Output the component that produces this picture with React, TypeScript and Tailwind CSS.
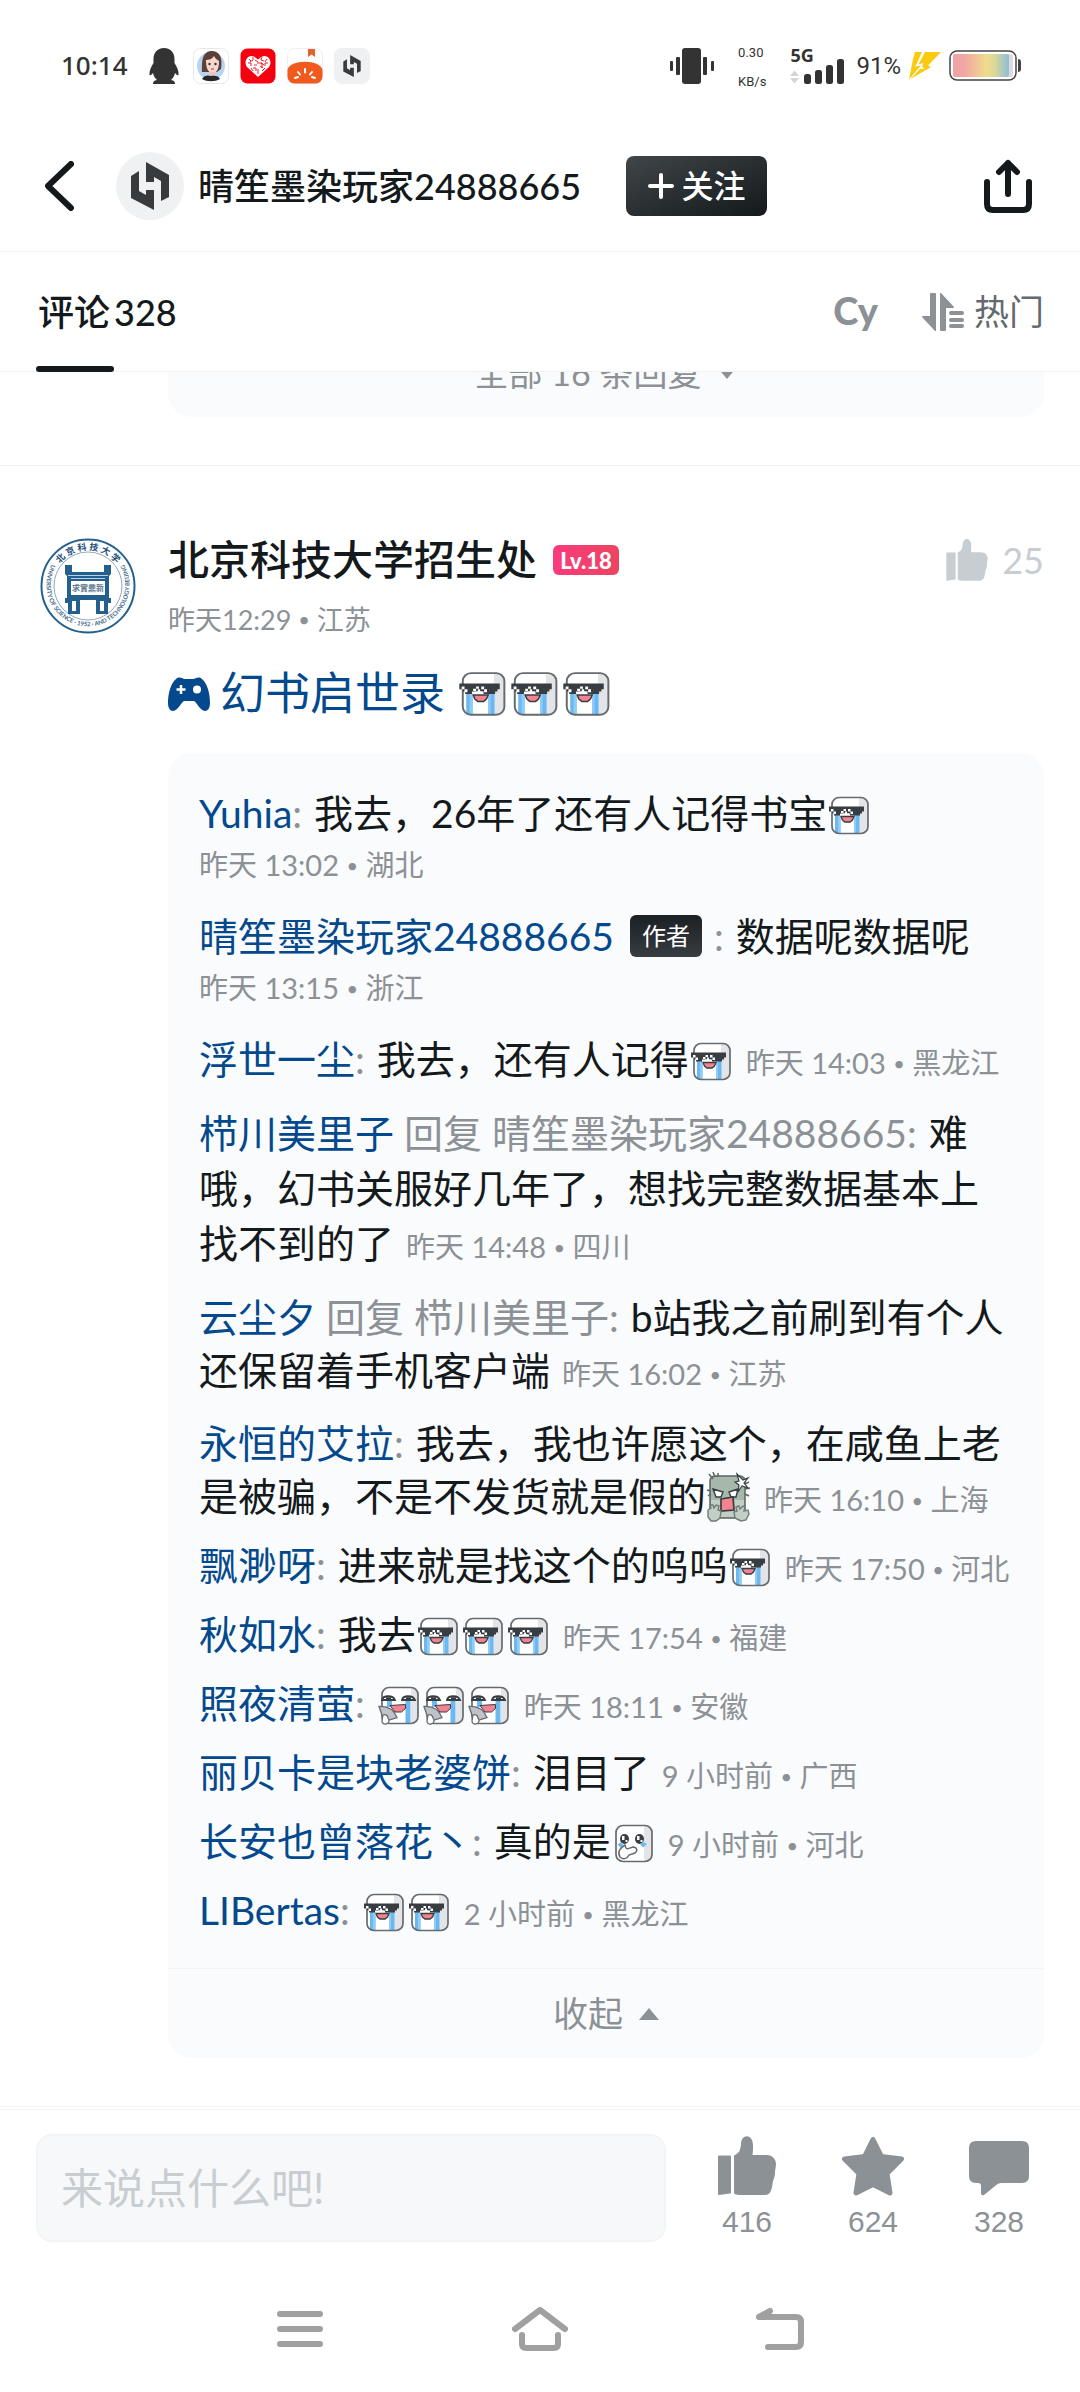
import React from "react";

type Reply = {
  name: string;
  author?: boolean;
  replyTo?: string;
  content: React.ReactNode;
  time: string;
  place: string;
  timeBelow?: boolean;
  className?: string;
};

const ShadesEmoji: React.FC<{ className?: string }> = ({ className = "h-10 w-[45px] align-[-8px]" }) => (
  <svg viewBox="0 0 45 40" className={`inline-block ${className}`} role="img" aria-label="墨镜哭">
    <rect x="5" y="1.5" width="36" height="36" rx="7" fill="#fff" />
    <path d="M32 1.5h2a7 7 0 0 1 7 7v22a7 7 0 0 1-7 7h-2z" fill="#e3e4e8" />
    <path d="M8 18h5.500v19.500H11a4 4 0 0 1-3-1zM27 18h5.500v19.500H27z" fill="#6bb9f0" />
    <path d="M11 18h2.500v19.500H11zM27 18h2v19.500H27z" fill="#8fcdf7" />
    <rect x="5" y="1.500" width="36" height="36" rx="7" fill="none" stroke="#666b70" strokeWidth="1.700" />
    <path d="M2 10.500h35v5h-2v2h-2v2H22v-2h-2v-2h-2v2h-2v2H7v-2H5v-2H2z" fill="#373d40" />
    <path d="M4 13h2.500v2.500H4zM6.500 15.500H9V18H6.500zM14 15h2.500v2H14zM16.500 13H19v2h-2.500zM21 13h2.500v2.500H21zM23.500 15.500H26V18h-2.500zM13 17.500h10v3H13z" fill="#fff" />
    <path d="M14 20.500h13l-1.500 3.500-2.500 2h-5l-2.500-2z" fill="#f4828f" stroke="#373d40" strokeWidth="1.300" />
  </svg>
);

const FanEmoji = () => (
  <svg viewBox="0 0 45 40" className="inline-block h-10 w-[45px] align-[-8px]" role="img" aria-label="笑哭">
    <rect x="5" y="1.500" width="36" height="36" rx="7" fill="#fff" />
    <path d="M34 1.500a7 7 0 0 1 7 7v22a7 7 0 0 1-7 7z" fill="#e3e4e8" />
    <path d="M10 14h5v7h-5zM28.500 14h5v23h-5z" fill="#6bb9f0" />
    <rect x="5" y="1.500" width="36" height="36" rx="7" fill="none" stroke="#666b70" strokeWidth="1.700" />
    <path d="M5 14c1-5 11-5 13 0zM25 14c1-5 11-5 13 0z" fill="#fff" stroke="#373d40" strokeWidth="1.800" />
    <path d="M9 12.500h5M29 12.500h5" stroke="#373d40" strokeWidth="2.500" />
    <path d="M13 19.500l15.500-1v4l-4 3.500H18z" fill="#f4828f" stroke="#373d40" strokeWidth="1" />
    <path d="M2 20.500q13-1 18 11l-8 2.500-6-2z" fill="#bfc2c6" stroke="#666b70" strokeWidth="1.300" />
    <path d="M6 29a3.500 3.500 0 0 1 5 3 3.500 3.500 0 0 1-2 6 3 3 0 0 1-4-3z" fill="#fff" stroke="#666b70" strokeWidth="1.300" />
  </svg>
);

const TearyEmoji = () => (
  <svg viewBox="0 0 45 40" className="inline-block h-10 w-[45px] align-[-8px]" role="img" aria-label="感动">
    <rect x="5" y="1.500" width="36" height="36" rx="7" fill="#fff" />
    <path d="M33 1.500h1a7 7 0 0 1 7 7v22a7 7 0 0 1-7 7h-1z" fill="#e3e4e8" />
    <rect x="5" y="1.500" width="36" height="36" rx="7" fill="none" stroke="#666b70" strokeWidth="1.700" />
    <ellipse cx="13.500" cy="15" rx="4.500" ry="5" fill="#373d40" />
    <ellipse cx="28.500" cy="15" rx="4.500" ry="5" fill="#373d40" />
    <path d="M11 12h2.500v4H11zM26 12h2.500v4H26zM14.500 16h2v2h-2zM29.500 16h2v2h-2z" fill="#fff" />
    <path d="M6.500 20.500l3-2 3 2-3 3zM29 20l3-2 4 2-4 3.500z" fill="#6bb9f0" />
    <path d="M9 33c-3-5 0-9 5-12l1 3c1 2 3 0 7-1 4 0 5 4 2 6l-6 2c-2 4-6 5-9 2z" fill="#fff" stroke="#666b70" strokeWidth="1.500" />
  </svg>
);

const ZombieEmoji = () => (
  <svg viewBox="0 0 46 50" className="inline-block h-[50px] w-[46px] align-[-11px]" role="img" aria-label="抓狂">
    <rect x="4" y="4" width="35" height="42" rx="5" fill="#a6b8ac" stroke="#5b6662" strokeWidth="1.500" />
    <path d="M5 28h33v13a4 4 0 0 1-4 4H9a4 4 0 0 1-4-4z" fill="#c3cec6" />
    <path d="M3 2l4 5M7 0l2 5M12 1v4M1 18l4 1M2 24l3-2M39 12l4-2M39 17l5-1M39 22l4 2" stroke="#5b6662" strokeWidth="1.500" />
    <path d="M31 2l2 7-4 1 4 3-1 7 4-6 6 2-4-5 4-5-5 2z" fill="#fff" stroke="#373d40" strokeWidth="1.200" />
    <path d="M7 17l10 3-2 5h-5zM32 17l-9 3 2 5h5z" fill="#fff" stroke="#373d40" strokeWidth="1.400" />
    <path d="M15 27l12-2 1 13-13 1z" fill="#f4828f" stroke="#373d40" strokeWidth="1.700" />
    <path d="M2 38l3-2-1-3h3l1 3 2-3 3 1-1 4 3 1-1 7-4 3H5l-3-4zM28 40l3-1-1-4 3-1 1 3 3-3 2 1-1 4 4-1 1 4-3 6-5 1-6-3z" fill="#c3cec6" stroke="#6f7c77" strokeWidth="1.400" />
  </svg>
);

const HLogo: React.FC<{ className: string }> = ({ className }) => (
  <svg viewBox="0 0 38 48" className={className} fill="#373b3d" aria-hidden="true">
    <path d="M0 14l8-5v20l7 4v-5h8v20L0 36z" />
    <path d="M15 0l23 13v22l-8 4V19l-7-4v5h-8z" />
  </svg>
);

const ThumbIcon: React.FC<{ className: string }> = ({ className }) => (
  <svg viewBox="0 0 58 59" className={className} fill="currentColor" aria-hidden="true">
    <path d="M1 19h11q1 0 1 1v36q0 1-1 1L1 58.500q-1 0-1-1V20q0-1 1-1z" />
    <path d="M16 19c6-3 6-5 7-11 0-11 12-11 12 1 0 4 0 6-.5 9.500H49c5 0 9 4 9 9 0 3-1 5-1 9 0 3-1 5-2 8l-1 6c-1 5-3 8-7 8H22c-3 0-6-1-6-2z" />
  </svg>
);

const replies: Reply[] = [
  { name: "Yuhia", content: <>我去，26年了还有人记得书宝<ShadesEmoji /></>, time: "昨天 13:02", place: "湖北", timeBelow: true },
  { name: "晴笙墨染玩家24888665", author: true, content: "数据呢数据呢", time: "昨天 13:15", place: "浙江", timeBelow: true, className: "mt-5" },
  { name: "浮世一尘", content: <>我去，还有人记得<ShadesEmoji /></>, time: "昨天 14:03", place: "黑龙江", className: "mt-5" },
  {
    name: "栉川美里子",
    replyTo: "晴笙墨染玩家24888665",
    content: <>难<br />哦，幻书关服好几年了，想找完整数据基本上<br />找不到的了</>,
    time: "昨天 14:48",
    place: "四川",
    className: "mt-5 leading-[55px]",
  },
  {
    name: "云尘夕",
    replyTo: "栉川美里子",
    content: <>b站我之前刷到有个人<br />还保留着手机客户端</>,
    time: "昨天 16:02",
    place: "江苏",
    className: "mt-5",
  },
  {
    name: "永恒的艾拉",
    content: <>我去，我也许愿这个，在咸鱼上老<br />是被骗，不是不发货就是假的<ZombieEmoji /></>,
    time: "昨天 16:10",
    place: "上海",
    className: "mt-5",
  },
  { name: "飘渺呀", content: <>进来就是找这个的呜呜<ShadesEmoji /></>, time: "昨天 17:50", place: "河北", className: "mt-4" },
  { name: "秋如水", content: <>我去<ShadesEmoji /><ShadesEmoji /><ShadesEmoji /></>, time: "昨天 17:54", place: "福建", className: "mt-4" },
  { name: "照夜清萤", content: <><FanEmoji /><FanEmoji /><FanEmoji /></>, time: "昨天 18:11", place: "安徽", className: "mt-4" },
  { name: "丽贝卡是块老婆饼", content: "泪目了", time: "9 小时前", place: "广西", className: "mt-4" },
  { name: "长安也曾落花丶", content: <>真的是<TearyEmoji /></>, time: "9 小时前", place: "河北", className: "mt-4" },
  { name: "LIBertas", content: <><ShadesEmoji /><ShadesEmoji /></>, time: "2 小时前", place: "黑龙江", className: "mt-4" },
];

const StatusBar = () => (
  <div className="flex h-[121px] items-center justify-between pr-[59px] pl-[61px] pt-2.5 text-[#333]">
    <div className="flex items-center">
      <span className="w-[72px] font-['Noto_Sans'] text-[26px] font-medium">10:14</span>
      <svg viewBox="0 0 30 36" className="ml-4 h-9 w-[30px]" fill="#333" aria-hidden="true">
        <path d="M15 0C8 0 4.500 5 4.500 11v4C2 19 0 23 .5 27c1 1 2.500-.5 3.500-2 .5 3 2 5 4 7-3 .5-4 1.500-4 4h22c0-2.500-1-3.500-4-4 2-2 3.500-4 4-7 1 1.500 2.500 3 3.500 2 .5-4-1.500-8-4-12v-4C25.500 5 22 0 15 0z" />
      </svg>
      <svg viewBox="0 0 36 36" className="ml-[14px] size-9" aria-hidden="true">
        <rect x=".5" y=".5" width="35" height="35" rx="7" fill="#fff" stroke="#e8e8e8" />
        <circle cx="18" cy="18" r="14" fill="#b9d4f3" />
        <path d="M9 24C8 8 12 3 19 3s11 6 9 18l-4 3z" fill="#5b4137" />
        <path d="M13 12c3 0 6-1 8-4 1 2 3 4 5 5 0 8-2 12-6.500 12S13 20 13 12z" fill="#f6d7cc" />
        <path d="M16 24h6v4h-6z" fill="#eec5b8" />
        <path d="M9 31c2-4 6-4 9-3 4-1 8 0 9 3-5 3-13 3-18 0z" fill="#27282c" />
        <circle cx="16.500" cy="16" r="1.200" fill="#333" />
        <circle cx="22.500" cy="16" r="1.200" fill="#333" />
        <path d="M18 21h3" stroke="#c2504e" strokeWidth="1.200" />
      </svg>
      <svg viewBox="0 0 36 36" className="ml-[11px] size-9" aria-hidden="true">
        <rect x=".5" y=".5" width="35" height="35" rx="7" fill="#f5000f" />
        <path d="M18 29L7 19C3 13 8 6 14 8.500l4 3 4-3C28 6 33 13 29 19z" fill="#fff" />
        <path d="M9 11l2 2M13 9v3l-3 2M8 15h3v3M15 12l3 2v2M14 17h3M13 20h3v3M18 21v5M11 20l2 3M22 9l-1 3 3 1M27 11l-2 3M28 15h-3v3M21 15l3 2M20 18l3 2M25 20l-3 3M19 15h3v5" fill="none" stroke="#f5000f" strokeWidth=".9" />
      </svg>
      <svg viewBox="0 0 36 36" className="ml-[11px] size-9" aria-hidden="true">
        <rect x=".5" y=".5" width="35" height="35" rx="7" fill="#fff" stroke="#eee" />
        <path d="M21 1h7v8l-3.500-2.500L21 9z" fill="#e8602c" />
        <path d="M.5 22C2 11 34 11 35.500 22v6.500a7 7 0 0 1-7 7h-21a7 7 0 0 1-7-7z" fill="#f05a1c" />
        <path d="M8 30l3-1M11 24l2 2.500M18 21v3.500M25 24l-2 2.500M28 30l-3-1" stroke="#fff" strokeWidth="2" strokeLinecap="round" />
      </svg>
      <span className="ml-[11px] flex size-9 items-center justify-center rounded-lg bg-[#eff0f2]">
        <HLogo className="h-[22px] w-[18px]" />
      </span>
    </div>
    <div className="flex items-center">
      <svg viewBox="0 0 44 36" className="h-9 w-11" fill="#333" aria-hidden="true">
        <rect x="12" width="19" height="36" rx="3" />
        <rect x="6" y="9" width="4" height="18" rx="1" />
        <rect y="13" width="3" height="10" rx="1" />
        <rect x="33" y="9" width="4" height="18" rx="1" />
        <rect x="41" y="13" width="3" height="10" rx="1" />
      </svg>
      <span className="ml-6 flex flex-col pt-0.5 font-[Roboto] text-[13px] leading-[29px]">
        <span>0.30</span>
        <span>KB/s</span>
      </span>
      <div className="relative ml-6 h-9 w-[54px]">
        <span className="absolute -top-0.5 left-0 font-['Noto_Sans'] text-lg leading-[18px] font-bold">5G</span>
        <svg viewBox="0 0 54 36" className="h-9 w-[54px]" fill="#333" aria-hidden="true">
          <path d="M0 28l4.500-5.500L9 28zM0 30h9l-4.500 5.500z" fill="#d5d5d5" />
          <rect x="14" y="26" width="7" height="10" rx="2.500" />
          <rect x="25" y="22" width="7" height="14" rx="2.500" />
          <rect x="36" y="17" width="7" height="19" rx="2.500" />
          <rect x="47" y="11" width="7" height="25" rx="2.500" />
        </svg>
      </div>
      <span className="ml-3 font-[Roboto] text-2xl">91%</span>
      <svg viewBox="0 0 32 28" className="ml-2 h-7 w-8" fill="#fbc90e" aria-hidden="true">
        <path d="M6 0h7L7.500 12 6 14.500l6-1-12 14L4 7z" />
        <path d="M16 0h16L19 13.500l3 1.500L1.500 27 11 17l5-.5-3-1.500 1.500-4-5 1.500z" />
      </svg>
      <svg viewBox="0 0 72 31" className="ml-2 h-[31px] w-[72px]" aria-hidden="true">
        <defs>
          <linearGradient id="battery">
            <stop offset="0" stopColor="#f2a1a5" />
            <stop offset=".2" stopColor="#f0a6a3" />
            <stop offset=".6" stopColor="#f0dc8c" />
            <stop offset=".75" stopColor="#d9d898" />
            <stop offset="1" stopColor="#8fbcdb" />
          </linearGradient>
        </defs>
        <rect x="1" y="1" width="66" height="29" rx="7" fill="#fff" stroke="#444" strokeWidth="1.500" />
        <rect x="4" y="4" width="60" height="23" rx="2" fill="#dcdce0" />
        <rect x="4" y="4" width="56" height="23" rx="2" fill="url(#battery)" />
        <path d="M69 9q3 0 3 3v7q0 3-3 3z" fill="#444" />
      </svg>
    </div>
  </div>
);

const Header = () => (
  <header className="flex h-[131px] items-center border-b border-[#f2f2f3] pr-12 pl-[45px]">
    <button aria-label="返回">
      <svg viewBox="0 0 29 50" className="h-[50px] w-[29px]" fill="none" stroke="#14191c" strokeWidth="6" strokeLinecap="round" strokeLinejoin="round">
        <path d="M26 3L3 25l23 22" />
      </svg>
    </button>
    <span className="ml-[42px] flex size-[68px] items-center justify-center rounded-full bg-[#f0f1f3]">
      <HLogo className="h-12 w-[38px]" />
    </span>
    <h1 className="ml-[14px] text-4xl font-medium">晴笙墨染玩家24888665</h1>
    <button className="ml-[45px] flex h-[60px] w-[141px] items-center justify-center gap-2 rounded-lg bg-linear-to-br from-[#41464a] to-[#14191c] text-[32px] font-medium text-white">
      <svg viewBox="0 0 26 26" className="size-[26px]" stroke="currentColor" strokeWidth="4" strokeLinecap="round" aria-hidden="true">
        <path d="M13 2v22M2 13h22" />
      </svg>
      关注
    </button>
    <button aria-label="分享" className="ml-auto">
      <svg viewBox="0 0 48 54" className="h-[54px] w-12" fill="none" stroke="#14191c" strokeWidth="6" strokeLinecap="round" strokeLinejoin="round">
        <path d="M3 23v22q0 6 6 6h30q6 0 6-6V23M24 35V4M15 13l9-9 9 9" />
      </svg>
    </button>
  </header>
);

const TabBar = () => (
  <div className="flex h-[120px] items-stretch justify-between border-b border-[#f2f2f3] pr-9 pl-9">
    <button className="relative flex items-center gap-1 pl-0.5 text-4xl font-medium">
      <span>评论</span>
      <span>328</span>
      <span className="absolute -bottom-px left-0 h-1.5 w-[78px] rounded-full bg-[#14191c]" />
    </button>
    <div className="flex items-center">
      <button className="pb-1 text-[38px] leading-none font-black text-[#8c9196]">Cy</button>
      <button className="ml-11 flex items-center text-[35px] text-[#64696e]">
        <svg viewBox="0 0 42 38" className="mr-[10px] h-[38px] w-[42px]" fill="#8c9196" aria-hidden="true">
          <path d="M9 0h4q1 0 1 1v37h-1L0 24q0-1 1-1h7V1q0-1 1-1zM18 0h1l13 14q0 1-1 1h-7v22q0 1-1 1h-4q-1 0-1-1z" />
          <rect x="27" y="18" width="15" height="4" rx="2" />
          <rect x="27" y="25" width="15" height="4" rx="2" />
          <rect x="27" y="31" width="15" height="4" rx="2" />
        </svg>
        热门
      </button>
    </div>
  </div>
);

const Seal = () => (
  <svg viewBox="0 0 96 96" className="size-24 shrink-0" role="img" aria-label="北京科技大学招生处">
    <defs>
      <path id="seal-top" d="M12 48a36 36 0 0 1 72 0" />
      <path id="seal-bottom" d="M11 28a41.500 41.500 0 1 0 74 0" />
    </defs>
    <circle cx="48" cy="48" r="46.500" fill="#fff" stroke="#23608f" strokeWidth="2" />
    <circle cx="48" cy="48" r="34" fill="none" stroke="#8fa9bd" strokeWidth="1" />
    <text fontSize="9" fontWeight="700" fill="#1d4f78" textAnchor="middle">
      <textPath href="#seal-top" startOffset="50%">北 京 科 技 大 学</textPath>
    </text>
    <text fontSize="6" fontWeight="700" fill="#3e6a8c" textAnchor="middle">
      <textPath href="#seal-bottom" startOffset="50%">UNIVERSITY OF SCIENCE · 1952 · AND TECHNOLOGY BEIJING</textPath>
    </text>
    <path d="M25 27h7v7h32v-7h7v9l-2 2v22h2v5h-3v11H56V62H40v14H28V65h-3v-5h2V38l-2-2z" fill="#23608f" />
    <path d="M31 43h34v14H31zM32 63h4v10h-4zM60 63h4v10h-4z" fill="#fff" />
    <path d="M28 37.500h40M31 40.500h34" stroke="#bcd0df" strokeWidth="1" />
    <text x="48" y="53" fontSize="8" fontWeight="700" fill="#5d7a90" textAnchor="middle">求實鼎新</text>
  </svg>
);

const PostTime: React.FC<{ time: string; place: string; className: string }> = ({ time, place, className }) => (
  <time className={className}>
    {time} <span className="align-[3px] text-xl leading-none">•</span> {place}
  </time>
);

const ReplyItem: React.FC<{ reply: Reply }> = ({ reply }) => (
  <li className={reply.className}>
    <p className="whitespace-nowrap">
      <a href="#" className="text-[#04498d]">{reply.name}</a>
      {reply.author && (
        <span className="ml-4 inline-flex h-[42px] w-[72px] items-center justify-center rounded-md bg-linear-to-b from-[#1a2023] to-[#383d41] align-[6px] text-2xl leading-none text-white">
          作者
        </span>
      )}
      {reply.replyTo && <span className="text-[#8c9196]"> 回复 {reply.replyTo}</span>}
      <span className={reply.author ? "mr-0.5 ml-3 text-[#8c9196]" : "mr-0.5 text-[#8c9196]"}>:</span> {reply.content}
      {!reply.timeBelow && (
        <> <PostTime time={reply.time} place={reply.place} className="ml-0.5 text-[29px] leading-none text-[#8c9196]" /></>
      )}
    </p>
    {reply.timeBelow && (
      <PostTime time={reply.time} place={reply.place} className="block text-[29px] leading-[50px] text-[#8c9196]" />
    )}
  </li>
);

const Comment = () => (
  <article className="flex gap-8 pt-[72px] pr-9 pb-12 pl-10">
    <Seal />
    <div className="min-w-0 flex-1">
      <div className="flex h-11 items-center">
        <h2 className="text-[41px] font-medium">北京科技大学招生处</h2>
        <span className="ml-4 flex h-[30px] w-[66px] items-center justify-center rounded-md bg-linear-to-r from-[#fb3a7c] to-[#ec4460] text-[22px] font-black text-white">
          Lv.18
        </span>
        <button className="ml-auto flex items-center gap-[14px] text-4xl text-[#c8cdd1]">
          <ThumbIcon className="h-[42px] w-[42px]" />
          25
        </button>
      </div>
      <PostTime time="昨天12:29" place="江苏" className="mt-[18px] block text-[27px] leading-10 text-[#8c9196]" />
      <p className="mt-6 flex h-[60px] items-center text-[45px]">
        <a href="#" className="flex items-center gap-[10px] text-[#04498d]">
          <svg viewBox="0 0 42 34" className="h-[34px] w-[42px]" aria-hidden="true">
            <path d="M8 2C11-1 14 1 16 2h10c2-1 5-3 8 0 5 4 8 14 8 24 0 8-5 10-9 6-3-3-5-7-7-8H16c-2 1-4 5-7 8-4 4-9 2-9-6C0 16 3 6 8 2z" fill="#04498d" />
            <path d="M13 8v9M8.500 12.500h9" stroke="#fff" strokeWidth="2.500" />
            <circle cx="29" cy="12.500" r="4" fill="#fff" />
          </svg>
          幻书启世录
        </a>
        <span className="ml-3 flex items-center">
          <ShadesEmoji className="h-[47px] w-[52px]" />
          <ShadesEmoji className="h-[47px] w-[52px]" />
          <ShadesEmoji className="h-[47px] w-[52px]" />
        </span>
      </p>
      <div className="mt-[29px] rounded-3xl bg-[#fafbfd]">
        <ul className="px-[31px] pt-[34px] pb-[31px] text-[39px] leading-[53px]">
          {replies.map((reply) => (
            <ReplyItem key={reply.name} reply={reply} />
          ))}
        </ul>
        <button className="flex h-[90px] w-full items-center justify-center gap-4 border-t border-[#f2f3f5] text-[35px] text-[#8c9196]">
          收起
          <svg viewBox="0 0 20 12" className="h-3 w-5" fill="currentColor" aria-hidden="true">
            <path d="M10 0l10 12H0z" />
          </svg>
        </button>
      </div>
    </div>
  </article>
);

const BottomBar = () => (
  <footer className="border-t border-[#f2f2f3] pt-0.5">
    <div className="flex items-center gap-[18px] border-t border-[#f2f2f3] py-6 pr-[18px] pl-9">
      <input
        type="text"
        aria-label="评论"
        placeholder="来说点什么吧!"
        className="h-[108px] min-w-0 flex-1 rounded-2xl border-2 border-[#f3f4f6] bg-[#f7f8fa] px-[23px] text-[42px] placeholder:text-[#c8cdd1]"
      />
      <div className="flex font-['Liberation_Sans'] text-3xl leading-9 text-[#8c9196]">
        <button className="flex w-[126px] flex-col items-center gap-2">
          <ThumbIcon className="h-[60px] w-[58px]" />
          416
        </button>
        <button className="flex w-[126px] flex-col items-center gap-2">
          <svg viewBox="0 0 62 60" className="h-[60px] w-[62px]" fill="currentColor" stroke="currentColor" strokeWidth="5" strokeLinejoin="round" aria-hidden="true">
            <path d="M31 3.500l8.500 17 20 2.500L45 37.500 48 57 31 48.500 14 57l3-19.500L2.500 23l20-2.500z" />
          </svg>
          624
        </button>
        <button className="flex w-[126px] flex-col items-center gap-2">
          <svg viewBox="0 0 60 60" className="size-[60px]" fill="currentColor" aria-hidden="true">
            <path d="M7 5h46q7 0 7 7v28q0 7-7 7H32q-3 0-6 3l-11 9q-3 1-3-2v-7q0-3-3-3H7q-7 0-7-7V12q0-7 7-7z" />
          </svg>
          328
        </button>
      </div>
    </div>
    <nav className="flex h-[126px] items-center justify-center text-[#a0a0a0]">
      <button aria-label="菜单" className="flex w-60 justify-center">
        <svg viewBox="0 0 46 36" className="h-9 w-[46px]" stroke="currentColor" strokeWidth="6" strokeLinecap="round">
          <path d="M3 3h40M3 18h40M3 33h40" />
        </svg>
      </button>
      <button aria-label="主页" className="flex w-60 justify-center">
        <svg viewBox="0 0 58 44" className="h-11 w-[58px]" fill="none" stroke="currentColor" strokeWidth="6" strokeLinecap="round" strokeLinejoin="round">
          <path d="M4 22L29 3l25 19M11 28v9q0 4 4 4h28q4 0 4-4v-9" />
        </svg>
      </button>
      <button aria-label="后退" className="flex w-60 justify-center">
        <svg viewBox="0 0 48 44" className="h-11 w-12" fill="none" stroke="currentColor" strokeWidth="6" strokeLinecap="round" strokeLinejoin="round">
          <path d="M14 4L3 10h37q5 0 5 5v20q0 5-5 5H12" />
        </svg>
      </button>
    </nav>
  </footer>
);

const App: React.FC = () => {
  return (
    <div className="flex min-h-screen flex-col bg-white font-[Lato,'Noto_Sans_CJK_SC',sans-serif] text-[#14191c]">
      <StatusBar />
      <Header />
      <TabBar />
      <main className="flex-1">
        <section className="border-b border-[#f2f2f3] pr-9 pb-12 pl-[168px]">
          <div className="flex h-[45px] flex-col justify-end overflow-hidden rounded-b-3xl bg-[#fafbfd]">
            <button className="flex shrink-0 items-center justify-center gap-4 pb-[18px] text-[34px] leading-[52px] text-[#8c9196]">
              全部 16 条回复
              <svg viewBox="0 0 20 12" className="h-3 w-5" fill="currentColor" aria-hidden="true">
                <path d="M0 0h20L10 12z" />
              </svg>
            </button>
          </div>
        </section>
        <Comment />
      </main>
      <BottomBar />
    </div>
  );
};

export default App;
